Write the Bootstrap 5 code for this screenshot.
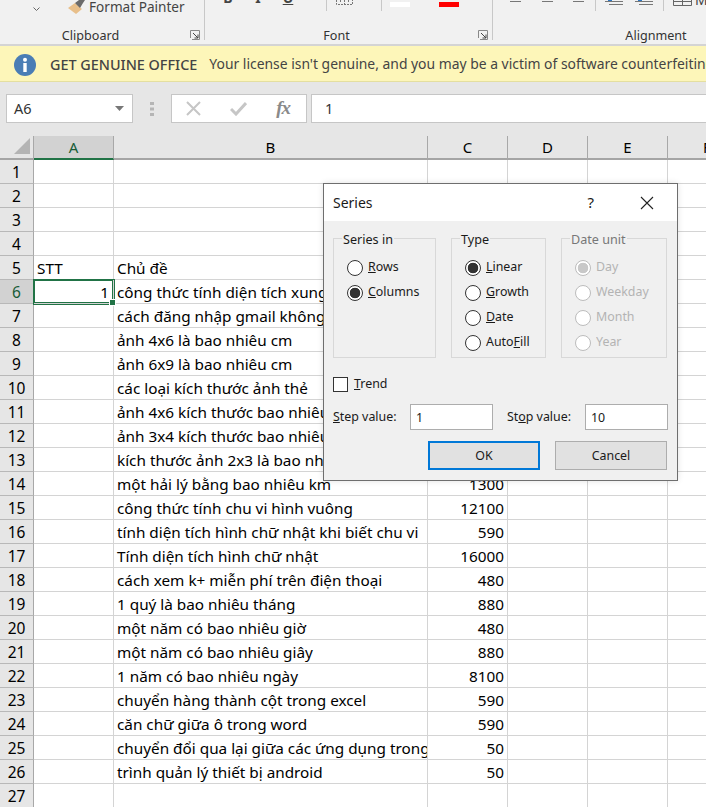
<!DOCTYPE html>
<html lang="vi">
<head>
<meta charset="utf-8">
<title>Series</title>
<link href="https://cdn.jsdelivr.net/npm/bootstrap@5.3.0/dist/css/bootstrap.min.css" rel="stylesheet">
<style>
html,body{margin:0;height:807px;overflow:hidden;background:#fff}
body{font-family:"Noto Sans","Liberation Sans",sans-serif;color:#000}
.xl-app{position:relative;width:706px;height:807px;overflow:hidden}
.xl-ribbon{height:46px;background:#f1f1f1;border-bottom:2px solid #d4d4d4;overflow:hidden}
.xl-group{height:40px;border-right:1px solid #c8c8c8;position:relative;flex:none}
.xl-clip{width:205px}
.xl-font{width:288px}
.xl-align{width:214px;border-right:0}
.xl-tools{height:14px;color:#444}
.xl-glabel{position:absolute;left:0;right:0;top:28px;text-align:center;font-size:12.6px;line-height:16px;color:#333}
.xl-gl-clip{right:23px}
.xl-gl-font{right:24px}
.xl-gl-align{right:-112px}
.xl-launch{position:absolute;right:4px;bottom:0;width:10px;height:10px}
.xl-painter{font-size:13.6px;line-height:14px;color:#444;gap:4px;margin-left:33px}
.xl-chev{margin:4px 24px 0 0;flex:none}
.xl-brush{flex:none}
.xl-fmt{font-size:14px;line-height:14px;font-weight:700;margin-top:-9px;color:#444;width:12px;text-align:center;flex:none}
.xl-b{margin-left:17px}
.xl-i,.xl-u{margin-left:18px}
.xl-u{text-decoration:underline}
.xl-vsep{width:1px;height:11px;background:#c8c8c8;flex:none}
.xl-s1{margin-left:32px}
.xl-bd{margin-left:9px;flex:none}
.xl-s2{margin-left:28px}
.xl-white{margin:2px 0 0 8px;width:20px;height:5px;background:#fff;flex:none}
.xl-red{margin:2px 0 0 29px;width:20px;height:5px;background:#f00;flex:none}
.xl-lines{margin-left:17px;flex:none}
.xl-s3{margin-left:10px}
.xl-ind{margin-left:9px;flex:none}
.xl-s4{margin-left:10px}
.xl-merge{margin-left:9px;flex:none}
.xl-m{font-weight:400;margin:-7px 0 0 3px}
.xl-banner{height:36px;background:#fdf6b9;border-bottom:1px solid #e4dfa0;padding:2px 0 0 14px;color:#444;font-size:13.9px;white-space:nowrap;overflow:hidden}
.xl-banner svg{flex:none}
.xl-banner b{font-weight:500;font-size:14.4px;margin:0 12px 0 14px}
.xl-fbar{height:54px;background:#e6e6e6;padding:12px 0 13px 6px;gap:0}
.xl-box{height:29px;background:#fff;border:1px solid #c6c6c6;flex:none}
.xl-name{width:127px;padding:0 8px 0 7px;font-size:14.5px;color:#333}
.xl-drag{width:38px;flex:none}
.xl-fx{width:136px;color:#c6c6c6;padding:0 16px 0 14px}
.xl-fxt{font-family:"Liberation Serif",serif;font-style:italic;font-weight:700;font-size:19px;color:#8a8a8a;letter-spacing:-1px}
.xl-input{flex:1;margin-left:4px;padding-left:13px;font-size:14.5px;color:#333;border-right:0}
.xl-sheet{border-collapse:separate;border-spacing:0;table-layout:fixed;width:747px;font-size:15.3px}
.xl-c0{width:34px}
.xl-c1,.xl-c3,.xl-c4,.xl-c5{width:80px}
.xl-c2{width:314px}
.xl-c6{width:79px}
.xl-sheet th,.xl-sheet td{height:24px;padding:1px 3px 0;white-space:nowrap;overflow:hidden;line-height:22px;font-weight:400;border-right:1px solid #d4d4d4;border-bottom:1px solid #d4d4d4}
.xl-sheet thead th{height:24px;padding-top:0;background:#e6e6e6;text-align:center;border-right:1px solid #a8a8a8;border-bottom:2px solid #a5a5a5;font-size:15px;line-height:22px}
.xl-sheet tbody th{background:#e6e6e6;text-align:center;padding:1px 0 0;border-right:1px solid #a8a8a8;border-bottom:1px solid #b8b8b8;font-size:15.5px}
.xl-sheet thead th.xl-sel{background:#d2d2d2;border-bottom-color:#217346;color:#185c37}
.xl-sheet tbody th.xl-sel{background:#d2d2d2;color:#185c37}
.xl-sheet td.xl-num{text-align:right;padding-right:3px}
.xl-sheet td.xl-active{position:relative;text-align:right;padding-right:4px;box-shadow:inset 0 0 0 1px #217346,0 0 0 1px #217346;overflow:visible}
.xl-handle{position:absolute;right:-3px;bottom:-3px;width:5px;height:5px;background:#217346;border:1px solid #fff;box-sizing:content-box}
.xl-corner{width:0;height:0;border-style:solid;border-width:0 0 16px 16px;border-color:transparent transparent #b4b4b4 transparent;margin:-2px 0 0 14px}
.xl-dialog{position:absolute;left:323px;top:183px;width:355px;height:298px;background:#f0f0f0;border:1px solid #6e6e6e;font-size:12.4px;color:#1a1a1a;box-shadow:0 0 6px rgba(0,0,0,.12)}
.xl-title{height:37px;background:#fff;padding:0 13px 0 9px;font-size:14px}
.xl-help{margin-left:auto;margin-right:46px;font-size:15px}
.xl-closex{margin-right:10px;flex:none}
.xl-body{padding:8px 9px 0 9px}
.xl-fs{border:1px solid #d8d8d8;height:129px;padding:0 0 0 13px;margin:0;min-width:0}
.xl-fs legend{float:none;width:auto;font-size:12.6px;line-height:14px;margin:0 0 0 -5px;padding:4px 1px 0;color:#1a1a1a}
.xl-fs.xl-off legend{color:#777}
.xl-w1{width:103px}
.xl-w2{width:95px;margin-left:15px}
.xl-w3{width:106px;margin-left:15px}
.xl-rad{height:25px;gap:5px;margin:0;padding:0;min-height:0}
.xl-rads{padding-top:8px}
.xl-rad .form-check-input{float:none;margin:0;width:16px;height:16px;border:1px solid #333;background-color:#fff;flex:none;opacity:1}
.xl-rad .form-check-input:checked{background-image:radial-gradient(circle,#333 0,#333 5px,transparent 5.6px);background-size:auto;border-color:#333;background-color:#fff}
.xl-rad .form-check-input:disabled{border-color:#bcbcbc;opacity:1}
.xl-rad .form-check-input:disabled:checked{background-image:radial-gradient(circle,#c8c8c8 0,#c8c8c8 5px,transparent 5.6px)}
.xl-rad .form-check-label{opacity:1;color:inherit;font-size:12.4px}
.xl-off{color:#777}
.xl-trend{height:16px;gap:6px;margin:18px 0 0 0;padding:0;min-height:0}
.xl-trend .form-check-input{float:none;margin:0;width:15px;height:15px;border:1px solid #333;border-radius:0;background-color:#fff}
.xl-vals{margin-top:12px;height:26px}
.xl-lab{flex:none}
.xl-val{width:83px;height:26px;min-height:0;border:1px solid #adadad;border-radius:0;padding:0 5px;font-size:12.4px;color:#1a1a1a;flex:none;background:#fff}
.xl-l1{width:77px}
.xl-l2{width:78px;margin-left:14px}
.xl-btns{margin-top:11px;justify-content:flex-end;gap:15px;padding-right:1px}
.xl-btn{width:112px;height:29px;padding:2px 0 0;font-size:12.4px;background:#e1e1e1;border:1px solid #adadad;border-radius:0;color:#1a1a1a}
.xl-btn.xl-ok{border:2px solid #0078d7}
</style>
</head>
<body>
<div class="xl-app">
  <div class="xl-ribbon d-flex">
    <div class="xl-group xl-clip">
      <div class="xl-painter d-flex align-items-center">
        <svg class="xl-chev" width="7" height="4" viewBox="0 0 7 4" aria-hidden="true"><path d="M.5.500l3 3 3-3" fill="none" stroke="#666"/></svg>
        <svg class="xl-brush" width="17" height="14" viewBox="0 0 17 14" aria-hidden="true"><path d="M0 8l7-5 7 6-6 5z" fill="#e8bf8a"/><path d="M7 3l4-3h6l-2 3-3 5z" fill="#6b6b6b"/></svg>
        <span>Format Painter</span>
      </div>
      <div class="xl-glabel xl-gl-clip">Clipboard</div>
      <svg class="xl-launch" viewBox="0 0 10 10" aria-hidden="true"><path d="M.5 8V.5H9.500V9.500H2" fill="none" stroke="#888"/><path d="M3 3l5 5M8 4.500V8H4.500" fill="none" stroke="#444"/></svg>
    </div>
    <div class="xl-group xl-font">
      <div class="d-flex xl-tools">
        <span class="xl-fmt xl-b">B</span>
        <span class="xl-fmt xl-i">I</span>
        <span class="xl-fmt xl-u">U</span>
        <span class="xl-vsep xl-s1"></span>
        <svg class="xl-bd" width="17" height="5" viewBox="0 0 17 5" aria-hidden="true"><path d="M.5 0v4.500h16V0M4.500 0v2M8.500 0v4M12.500 0v2" fill="none" stroke="#777" stroke-dasharray="2 1"/></svg>
        <span class="xl-vsep xl-s2"></span>
        <span class="xl-white"></span>
        <span class="xl-red"></span>
      </div>
      <div class="xl-glabel xl-gl-font">Font</div>
      <svg class="xl-launch" viewBox="0 0 10 10" aria-hidden="true"><path d="M.5 8V.5H9.500V9.500H2" fill="none" stroke="#888"/><path d="M3 3l5 5M8 4.500V8H4.500" fill="none" stroke="#444"/></svg>
    </div>
    <div class="xl-group xl-align">
      <div class="d-flex xl-tools">
        <svg class="xl-lines" width="75" height="5" viewBox="0 0 75 5" aria-hidden="true"><path d="M0 1.500h11M32 1.500h11M63 1.500h11" stroke="#777"/></svg>
        <span class="xl-vsep xl-s3"></span>
        <svg class="xl-ind" width="48" height="6" viewBox="0 0 48 6" aria-hidden="true"><path d="M0 1.500h18M30 1.500h18M4 4.500h14M34 4.500h14" stroke="#777"/><path d="M3 0h4M33 0h4" stroke="#2b78c5" stroke-width="2"/></svg>
        <span class="xl-vsep xl-s4"></span>
        <svg class="xl-merge" width="19" height="6" viewBox="0 0 19 6" aria-hidden="true"><path d="M.5 0v5.500h18V0M9.500 0v5.500M.5 1.500h18" fill="none" stroke="#666"/></svg>
        <span class="xl-fmt xl-m">M</span>
      </div>
      <div class="xl-glabel xl-gl-align">Alignment</div>
    </div>
  </div>
  <div class="xl-banner d-flex align-items-center">
    <svg width="22" height="22" viewBox="0 0 22 22" aria-hidden="true"><circle cx="11" cy="11" r="11" fill="#4a7db5"/><rect x="9.300" y="9" width="3.400" height="9" fill="#fff"/><circle cx="11" cy="5.800" r="2" fill="#fff"/></svg>
    <b>GET GENUINE OFFICE</b><span>Your license isn't genuine, and you may be a victim of software counterfeiting.</span>
  </div>
  <div class="xl-fbar d-flex">
    <div class="xl-box xl-name d-flex align-items-center justify-content-between"><span>A6</span><svg width="9" height="5" viewBox="0 0 9 5" aria-hidden="true"><path d="M0 0h9L4.500 5z" fill="#777"/></svg></div>
    <div class="xl-drag d-flex justify-content-center align-items-center"><svg width="4" height="14" viewBox="0 0 4 14" aria-hidden="true"><path d="M0 0h4v3H0zM0 5.500h4v3H0zM0 11h4v3H0z" fill="#b5b5b5"/></svg></div>
    <div class="xl-box xl-fx d-flex align-items-center justify-content-between">
      <svg width="15" height="15" viewBox="0 0 15 15" aria-hidden="true"><path d="M1 1l13 13M14 1L1 14" stroke="#c6c6c6" stroke-width="2"/></svg>
      <svg width="17" height="14" viewBox="0 0 17 14" aria-hidden="true"><path d="M1 7l5 5L16 1" fill="none" stroke="#c6c6c6" stroke-width="3"/></svg>
      <span class="xl-fxt">fx</span>
    </div>
    <div class="xl-box xl-input d-flex align-items-center">1</div>
  </div>
  <table class="xl-sheet">
    <colgroup><col class="xl-c0"><col class="xl-c1"><col class="xl-c2"><col class="xl-c3"><col class="xl-c4"><col class="xl-c5"><col class="xl-c6"></colgroup>
    <thead><tr><th class="p-0"><div class="xl-corner"></div></th><th class="xl-sel">A</th><th>B</th><th>C</th><th>D</th><th>E</th><th>F</th></tr></thead>
    <tbody>
      <tr><th>1</th><td></td><td></td><td></td><td></td><td></td><td></td></tr>
      <tr><th>2</th><td></td><td></td><td></td><td></td><td></td><td></td></tr>
      <tr><th>3</th><td></td><td></td><td></td><td></td><td></td><td></td></tr>
      <tr><th>4</th><td></td><td></td><td></td><td></td><td></td><td></td></tr>
      <tr><th>5</th><td>STT</td><td>Chủ đề</td><td></td><td></td><td></td><td></td></tr>
      <tr><th class="xl-sel">6</th><td class="xl-active">1<span class="xl-handle"></span></td><td>công thức tính diện tích xung</td><td></td><td></td><td></td><td></td></tr>
      <tr><th>7</th><td></td><td>cách đăng nhập gmail không</td><td></td><td></td><td></td><td></td></tr>
      <tr><th>8</th><td></td><td>ảnh 4x6 là bao nhiêu cm</td><td></td><td></td><td></td><td></td></tr>
      <tr><th>9</th><td></td><td>ảnh 6x9 là bao nhiêu cm</td><td></td><td></td><td></td><td></td></tr>
      <tr><th>10</th><td></td><td>các loại kích thước ảnh thẻ</td><td></td><td></td><td></td><td></td></tr>
      <tr><th>11</th><td></td><td>ảnh 4x6 kích thước bao nhiêu</td><td></td><td></td><td></td><td></td></tr>
      <tr><th>12</th><td></td><td>ảnh 3x4 kích thước bao nhiêu</td><td></td><td></td><td></td><td></td></tr>
      <tr><th>13</th><td></td><td>kích thước ảnh 2x3 là bao nhiêu</td><td></td><td></td><td></td><td></td></tr>
      <tr><th>14</th><td></td><td>một hải lý bằng bao nhiêu km</td><td class="xl-num">1300</td><td></td><td></td><td></td></tr>
      <tr><th>15</th><td></td><td>công thức tính chu vi hình vuông</td><td class="xl-num">12100</td><td></td><td></td><td></td></tr>
      <tr><th>16</th><td></td><td>tính diện tích hình chữ nhật khi biết chu vi</td><td class="xl-num">590</td><td></td><td></td><td></td></tr>
      <tr><th>17</th><td></td><td>Tính diện tích hình chữ nhật</td><td class="xl-num">16000</td><td></td><td></td><td></td></tr>
      <tr><th>18</th><td></td><td>cách xem k+ miễn phí trên điện thoại</td><td class="xl-num">480</td><td></td><td></td><td></td></tr>
      <tr><th>19</th><td></td><td>1 quý là bao nhiêu tháng</td><td class="xl-num">880</td><td></td><td></td><td></td></tr>
      <tr><th>20</th><td></td><td>một năm có bao nhiêu giờ</td><td class="xl-num">480</td><td></td><td></td><td></td></tr>
      <tr><th>21</th><td></td><td>một năm có bao nhiêu giây</td><td class="xl-num">880</td><td></td><td></td><td></td></tr>
      <tr><th>22</th><td></td><td>1 năm có bao nhiêu ngày</td><td class="xl-num">8100</td><td></td><td></td><td></td></tr>
      <tr><th>23</th><td></td><td>chuyển hàng thành cột trong excel</td><td class="xl-num">590</td><td></td><td></td><td></td></tr>
      <tr><th>24</th><td></td><td>căn chữ giữa ô trong word</td><td class="xl-num">590</td><td></td><td></td><td></td></tr>
      <tr><th>25</th><td></td><td>chuyển đổi qua lại giữa các ứng dụng trong</td><td class="xl-num">50</td><td></td><td></td><td></td></tr>
      <tr><th>26</th><td></td><td>trình quản lý thiết bị android</td><td class="xl-num">50</td><td></td><td></td><td></td></tr>
      <tr><th>27</th><td></td><td></td><td></td><td></td><td></td><td></td></tr>
    </tbody>
  </table>
  <div class="xl-dialog" role="dialog" aria-label="Series">
    <div class="xl-title d-flex align-items-center">
      <span>Series</span>
      <span class="xl-help">?</span>
      <svg class="xl-closex" width="14" height="14" viewBox="0 0 14 14" aria-hidden="true"><path d="M1 1l12 12M13 1L1 13" stroke="#222" stroke-width="1.100"/></svg>
    </div>
    <div class="xl-body">
      <div class="d-flex">
        <fieldset class="xl-fs xl-w1">
          <legend>Series in</legend>
          <div class="xl-rads">
            <div class="form-check xl-rad d-flex align-items-center"><input class="form-check-input" type="radio" name="r1" id="r1a"><label class="form-check-label" for="r1a"><u>R</u>ows</label></div>
            <div class="form-check xl-rad d-flex align-items-center"><input class="form-check-input" type="radio" name="r1" id="r1b" checked><label class="form-check-label" for="r1b"><u>C</u>olumns</label></div>
          </div>
        </fieldset>
        <fieldset class="xl-fs xl-w2">
          <legend>Type</legend>
          <div class="xl-rads">
            <div class="form-check xl-rad d-flex align-items-center"><input class="form-check-input" type="radio" name="r2" id="r2a" checked><label class="form-check-label" for="r2a"><u>L</u>inear</label></div>
            <div class="form-check xl-rad d-flex align-items-center"><input class="form-check-input" type="radio" name="r2" id="r2b"><label class="form-check-label" for="r2b"><u>G</u>rowth</label></div>
            <div class="form-check xl-rad d-flex align-items-center"><input class="form-check-input" type="radio" name="r2" id="r2c"><label class="form-check-label" for="r2c"><u>D</u>ate</label></div>
            <div class="form-check xl-rad d-flex align-items-center"><input class="form-check-input" type="radio" name="r2" id="r2d"><label class="form-check-label" for="r2d">Auto<u>F</u>ill</label></div>
          </div>
        </fieldset>
        <fieldset class="xl-fs xl-w3 xl-off">
          <legend>Date unit</legend>
          <div class="xl-rads">
            <div class="form-check xl-rad d-flex align-items-center"><input class="form-check-input" type="radio" name="r3" id="r3a" checked disabled><label class="form-check-label" for="r3a">Day</label></div>
            <div class="form-check xl-rad d-flex align-items-center"><input class="form-check-input" type="radio" name="r3" id="r3b" disabled><label class="form-check-label" for="r3b">Weekday</label></div>
            <div class="form-check xl-rad d-flex align-items-center"><input class="form-check-input" type="radio" name="r3" id="r3c" disabled><label class="form-check-label" for="r3c">Month</label></div>
            <div class="form-check xl-rad d-flex align-items-center"><input class="form-check-input" type="radio" name="r3" id="r3d" disabled><label class="form-check-label" for="r3d">Year</label></div>
          </div>
        </fieldset>
      </div>
      <div class="form-check xl-trend d-flex align-items-center"><input class="form-check-input" type="checkbox" id="tr"><label class="form-check-label" for="tr"><u>T</u>rend</label></div>
      <div class="xl-vals d-flex align-items-center">
        <label class="xl-lab xl-l1" for="st"><u>S</u>tep value:</label><input class="form-control xl-val" id="st" value="1">
        <label class="xl-lab xl-l2" for="sp">St<u>o</u>p value:</label><input class="form-control xl-val" id="sp" value="10">
      </div>
      <div class="xl-btns d-flex">
        <button class="btn xl-btn xl-ok" type="button">OK</button>
        <button class="btn xl-btn" type="button">Cancel</button>
      </div>
    </div>
  </div>
</div>
<script src="https://cdn.jsdelivr.net/npm/bootstrap@5.3.0/dist/js/bootstrap.bundle.min.js"></script>
</body>
</html>
